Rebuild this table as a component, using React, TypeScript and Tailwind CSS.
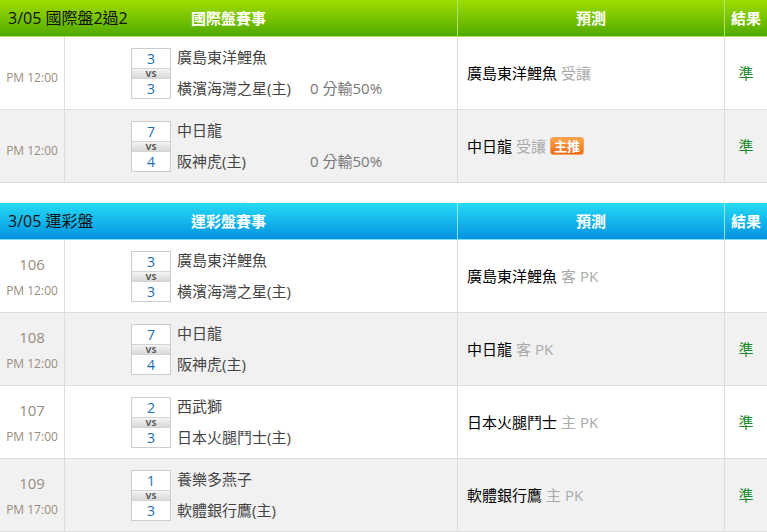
type Game = {
  no?: string;
  time: string;
  s1: string;
  s2: string;
  t1: string;
  t2: string;
  hcp?: string;
  pick: string;
  pickNote: string;
  hot?: boolean;
  result?: string;
};

const intl: Game[] = [
  { time: "PM 12:00", s1: "3", s2: "3", t1: "廣島東洋鯉魚", t2: "橫濱海灣之星(主)", hcp: "0 分輸50%", pick: "廣島東洋鯉魚", pickNote: "受讓", result: "準" },
  { time: "PM 12:00", s1: "7", s2: "4", t1: "中日龍", t2: "阪神虎(主)", hcp: "0 分輸50%", pick: "中日龍", pickNote: "受讓", hot: true, result: "準" },
];

const lottery: Game[] = [
  { no: "106", time: "PM 12:00", s1: "3", s2: "3", t1: "廣島東洋鯉魚", t2: "橫濱海灣之星(主)", pick: "廣島東洋鯉魚", pickNote: "客 PK" },
  { no: "108", time: "PM 12:00", s1: "7", s2: "4", t1: "中日龍", t2: "阪神虎(主)", pick: "中日龍", pickNote: "客 PK", result: "準" },
  { no: "107", time: "PM 17:00", s1: "2", s2: "3", t1: "西武獅", t2: "日本火腿鬥士(主)", pick: "日本火腿鬥士", pickNote: "主 PK", result: "準" },
  { no: "109", time: "PM 17:00", s1: "1", s2: "3", t1: "養樂多燕子", t2: "軟體銀行鷹(主)", pick: "軟體銀行鷹", pickNote: "主 PK", result: "準" },
];

const ScoreBox = ({ a, b }: { a: string; b: string }) => (
  <div className="w-[40px] border border-[#cccccc] bg-white text-center text-[14px] text-[#1a6fb3]">
    <div className="h-[19px] leading-[19px]">{a}</div>
    <div className="h-[11px] border-y border-[#d4d4d4] bg-gradient-to-b from-[#f4f4f4] to-[#d8d8d8] text-[9px] font-bold leading-[9px] text-[#555]">
      VS
    </div>
    <div className="h-[19px] leading-[19px]">{b}</div>
  </div>
);

const Header = ({ left, title, blue }: { left: string; title: string; blue?: boolean }) => (
  <div
    className={
      "grid h-[37px] grid-cols-[458px_267px_1fr] border-b " +
      (blue
        ? "border-[#7fe4f6] bg-gradient-to-b from-[#27dbf3] to-[#0892e2]"
        : "border-[#a6e35a] bg-gradient-to-b from-[#a0dd00] to-[#4eaa00]")
    }
  >
    <div className={"relative flex items-center justify-center border-r " + (blue ? "border-[#8fe8f8]" : "border-[#aee46a]")}>
      <span className="absolute left-[8px] text-[16px] text-[#111]">{left}</span>
      <span className="text-[15px] font-bold text-white">{title}</span>
    </div>
    <div className={"flex items-center justify-center border-r text-[15px] font-bold text-white " + (blue ? "border-[#8fe8f8]" : "border-[#aee46a]")}>
      預測
    </div>
    <div className="flex items-center justify-center text-[15px] font-bold text-white">結果</div>
  </div>
);

const Row = ({ g, odd }: { g: Game; odd: boolean }) => (
  <div className={"grid h-[73px] grid-cols-[65px_393px_267px_1fr] border-b border-[#dddddd] " + (odd ? "bg-[#f1f1f1]" : "bg-white")}>
    <div className={"flex flex-col items-center justify-center border-r border-[#dddddd] text-[#9a8d80] " + (g.no ? "" : "pt-[10px]")}>
      {g.no && <div className="mb-[9px] h-[20px] text-[15px] leading-[20px]">{g.no}</div>}
      <div className="h-[16px] text-[12px] leading-[16px]">{g.time}</div>
    </div>
    <div className="flex items-center border-r border-[#dddddd] pl-[66px]">
      <ScoreBox a={g.s1} b={g.s2} />
      <div className="ml-[6px] flex h-[52px] flex-col justify-between text-[15px] text-[#444]">
        <div className="h-[21px] leading-[21px]">{g.t1}</div>
        <div className="flex h-[21px] leading-[21px]">
          <span className="w-[133px]">{g.t2}</span>
          {g.hcp && <span className="text-[#777]">{g.hcp}</span>}
        </div>
      </div>
    </div>
    <div className="flex items-center border-r border-[#dddddd] pl-[9px] text-[15px]">
      <span className="text-black">{g.pick}</span>
      <span className="ml-[4px] text-[#aaaaaa]">{g.pickNote}</span>
      {g.hot && (
        <span className="ml-[4px] rounded-[3px] border border-[#f4a060] bg-gradient-to-b from-[#ffa448] to-[#ee6a12] px-[3px] text-[13px] font-bold leading-[16px] text-white">
          主推
        </span>
      )}
    </div>
    <div className="flex items-center justify-center text-[15px] text-[#1a8a2e]">{g.result}</div>
  </div>
);

export default function App() {
  return (
    <div className="h-[532px] w-[767px] overflow-hidden bg-white font-['Open_Sans','Noto_Sans_CJK_TC',sans-serif]">
      <Header left="3/05 國際盤2過2" title="國際盤賽事" />
      {intl.map((g, i) => (
        <Row key={i} g={g} odd={i % 2 === 1} />
      ))}
      <div className="mt-5">
        <Header left="3/05 運彩盤" title="運彩盤賽事" blue />
        {lottery.map((g, i) => (
          <Row key={i} g={g} odd={i % 2 === 1} />
        ))}
      </div>
    </div>
  );
}
